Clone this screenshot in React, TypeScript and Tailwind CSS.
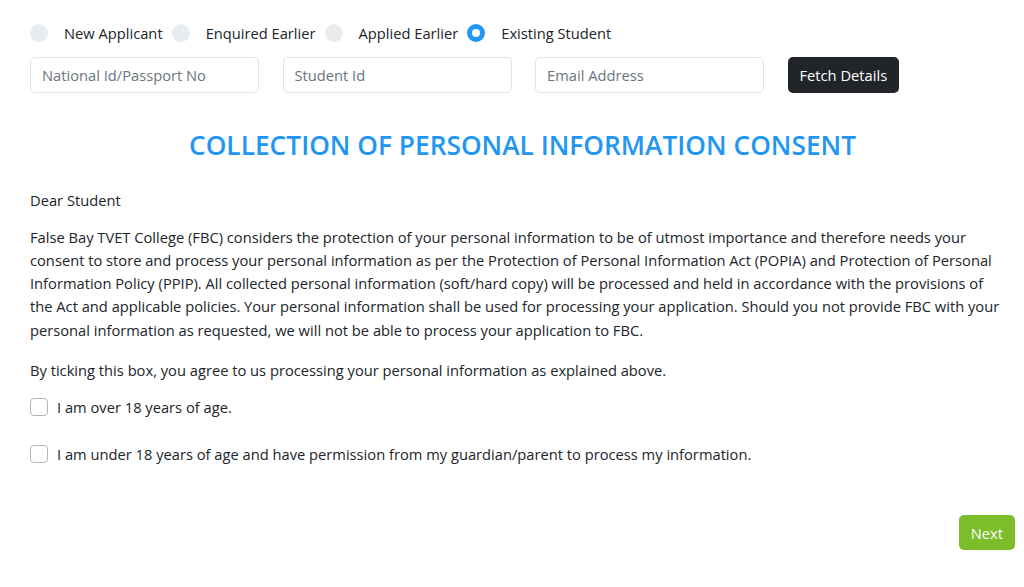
const font = { fontFamily: '"Segoe UI", "Open Sans", "Noto Sans", sans-serif' };

const options = [
  { label: "New Applicant", checked: false },
  { label: "Enquired Earlier", checked: false },
  { label: "Applied Earlier", checked: false },
  { label: "Existing Student", checked: true },
];

function Radio({ checked }: { checked: boolean }) {
  return checked ? (
    <span className="inline-block h-[18px] w-[18px] rounded-full border-[5px] border-[#2196f3] bg-white" />
  ) : (
    <span className="inline-block h-[18px] w-[18px] rounded-full bg-[#e9ecef]" />
  );
}

export default function App() {
  return (
    <div className="min-h-[587px] bg-white pl-[30px] pr-[9px] text-[14.7px] text-[#212529]" style={font}>
      {/* applicant type */}
      <div className="flex items-center pt-[22px]">
        {options.map((o) => (
          <label key={o.label} className="mr-[9px] flex items-center gap-[16px]">
            <Radio checked={o.checked} />
            <span>{o.label}</span>
          </label>
        ))}
      </div>

      {/* lookup */}
      <div className="mt-[13px] flex items-center gap-[23.5px]">
        <input
          placeholder="National Id/Passport No"
          className="h-[36px] w-[229px] rounded-[5px] border border-[#dee2e6] px-[11px] text-[14.7px] placeholder:text-[#6c757d]"
        />
        <input
          placeholder="Student Id"
          className="h-[36px] w-[229px] rounded-[5px] border border-[#dee2e6] px-[11px] text-[14.7px] placeholder:text-[#6c757d]"
        />
        <input
          placeholder="Email Address"
          className="h-[36px] w-[229px] rounded-[5px] border border-[#dee2e6] px-[11px] text-[14.7px] placeholder:text-[#6c757d]"
        />
        <button className="h-[36px] rounded-[5px] bg-[#212529] px-[12px] text-[14.7px] text-white">
          Fetch Details
        </button>
      </div>

      <h1 className="mt-[33px] text-center text-[26.3px] font-semibold uppercase text-[#2196f3]">
        Collection of Personal Information Consent
      </h1>

      <p className="mt-[24px]">Dear Student</p>

      <p className="mt-[14px] pr-[13px] leading-[23.3px]">
        False Bay TVET College (FBC) considers the protection of your personal information to be of utmost
        importance and therefore needs your consent to store and process your personal information as per the
        Protection of Personal Information Act (POPIA) and Protection of Personal Information Policy (PPIP). All
        collected personal information (soft/hard copy) will be processed and held in accordance with the
        provisions of the Act and applicable policies. Your personal information shall be used for processing
        your application. Should you not provide FBC with your personal information as requested, we will not be
        able to process your application to FBC.
      </p>

      <p className="mt-[17px]">By ticking this box, you agree to us processing your personal information as explained above.</p>

      <label className="mt-[15px] flex items-center gap-[9px]">
        <span className="inline-block h-[18px] w-[18px] rounded-[4px] border border-[#adb5bd] bg-white" />
        <span>I am over 18 years of age.</span>
      </label>

      <label className="mt-[25px] flex items-center gap-[9px]">
        <span className="inline-block h-[18px] w-[18px] rounded-[4px] border border-[#adb5bd] bg-white" />
        <span>I am under 18 years of age and have permission from my guardian/parent to process my information.</span>
      </label>

      <div className="mt-[50px] flex justify-end">
        <button className="h-[35px] rounded-[5px] bg-[#7cbd2b] px-[12px] text-[14.7px] text-white">Next</button>
      </div>
    </div>
  );
}
